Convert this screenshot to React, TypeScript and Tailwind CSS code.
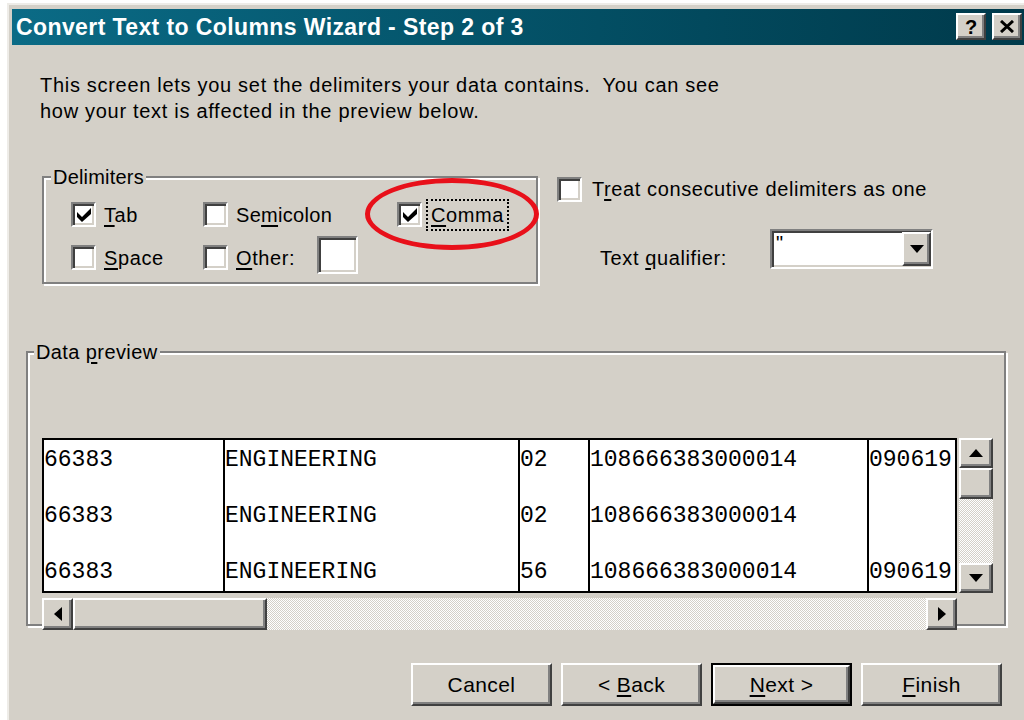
import React from 'react';

// classic 3D bevels
const raised =
  'bg-[#d4d0c8] border-2 border-t-white border-l-white border-r-[#404040] border-b-[#404040] shadow-[inset_-2px_-2px_0_#808080]';
const sunken =
  'bg-white border-2 border-t-[#808080] border-l-[#808080] border-r-white border-b-white shadow-[inset_2px_2px_0_#404040,inset_-2px_-2px_0_#d4d0c8]';
const etched = 'border-2 border-[#808080] shadow-[inset_2px_2px_0_#fff,2px_2px_0_#fff]';
const dither = 'bg-[repeating-conic-gradient(#d4d0c8_0_25%,#ffffff_0_50%)] bg-[length:2px_2px]';

function Key({ children }: { children: React.ReactNode }) {
  return <span className="underline decoration-2 underline-offset-[3px]">{children}</span>;
}

function CheckBox({ checked }: { checked?: boolean }) {
  return (
    <span className={`w-[25px] h-[25px] shrink-0 flex items-center justify-center ${sunken}`}>
      {checked && (
        <svg width="14" height="14" viewBox="0 0 7 7">
          <polygon points="0,2 2.5,4.5 7,0 7,3 2.5,7 0,4.5" fill="#000" />
        </svg>
      )}
    </span>
  );
}

function Arrow({ dir }: { dir: 'up' | 'down' | 'left' | 'right' }) {
  const pts = {
    up: '7,0 14,8 0,8',
    down: '0,0 14,0 7,8',
    left: '8,0 8,14 0,7',
    right: '0,0 8,7 0,14',
  }[dir];
  const vertical = dir === 'up' || dir === 'down';
  return (
    <svg width={vertical ? 14 : 8} height={vertical ? 8 : 14} viewBox={vertical ? '0 0 14 8' : '0 0 8 14'}>
      <polygon points={pts} fill="#000" />
    </svg>
  );
}

function ScrollButton({ dir, className = '' }: { dir: 'up' | 'down' | 'left' | 'right'; className?: string }) {
  return (
    <div className={`flex items-center justify-center shrink-0 ${raised} ${className}`}>
      <Arrow dir={dir} />
    </div>
  );
}

function TitleBar() {
  return (
    <div className="flex items-start h-[36px] bg-linear-to-r from-[#0b6b86] to-[#003a4b] pl-[4px] pr-[2px]">
      <span className="text-white font-bold text-[23px] leading-[36px] tracking-[0.4px]">
        Convert Text to Columns Wizard - Step 2 of 3
      </span>
      <div className="ml-auto mt-[4px] flex gap-[6px]">
        <div className={`w-[30px] h-[27px] flex items-center justify-center text-[20px] font-bold leading-none ${raised}`}>?</div>
        <div className={`w-[30px] h-[27px] flex items-center justify-center ${raised}`}>
          <svg width="14" height="13" viewBox="0 0 14 13">
            <path d="M1 1 L13 12 M13 1 L1 12" stroke="#000" strokeWidth="3" />
          </svg>
        </div>
      </div>
    </div>
  );
}

const rows = [
  ['66383', 'ENGINEERING', '02', '108666383000014', '090619'],
  ['66383', 'ENGINEERING', '02', '108666383000014', ''],
  ['66383', 'ENGINEERING', '56', '108666383000014', '090619'],
];
const colWidths = ['w-[181px]', 'w-[295px]', 'w-[70px]', 'w-[279px]', 'flex-1'];

function PreviewTable() {
  return (
    <div className="w-[915px] h-full bg-white border-2 border-black overflow-hidden flex font-['Liberation_Mono','Courier_New',monospace] text-[23px]">
      {colWidths.map((w, c) => (
        <div key={c} className={`${w} shrink-0 h-full overflow-hidden ${c < 4 ? 'border-r-2 border-black' : ''}`}>
          {rows.map((r, i) => (
            <div key={i} className="h-[56px] leading-[40px] whitespace-nowrap">
              {r[c]}
            </div>
          ))}
        </div>
      ))}
    </div>
  );
}

export default function App() {
  return (
    <div className="w-[1024px] h-[720px] overflow-hidden bg-white pl-[7px] pt-[3px] font-['Liberation_Sans',Arial,sans-serif] text-black">
      <div className="h-full bg-[#d4d0c8] border-l-2 border-t-2 border-[#eeece8] pl-[3px] pt-[4px]">
        <TitleBar />

        <p className="ml-[28px] mt-[27px] text-[20px] leading-[26px] tracking-[0.7px]">
          This screen lets you set the delimiters your data contains.&nbsp; You can see
          <br />
          how your text is affected in the preview below.
        </p>

        <div className="flex mt-[41px] ml-[30px] text-[20px] tracking-[0.6px]">
          <fieldset className={`relative w-[496px] h-[119px] ${etched}`}>
            <legend className="ml-[7px] px-[2px] leading-[24px] bg-[#d4d0c8] tracking-[0.2px]">Delimiters</legend>
            <div className="grid grid-cols-[132px_194px_1fr] grid-rows-[43px_43px] items-center pl-[27px] pt-[4px]">
              <label className="flex items-center gap-[8px]">
                <CheckBox checked />
                <span><Key>T</Key>ab</span>
              </label>
              <label className="flex items-center gap-[8px]">
                <CheckBox />
                <span className="tracking-[0.3px]">Se<Key>m</Key>icolon</span>
              </label>
              <label className="flex items-center gap-[4px]">
                <CheckBox checked />
                <span className="border-2 border-dotted border-black px-[3px] leading-[28px]"><Key>C</Key>omma</span>
              </label>
              <label className="flex items-center gap-[8px]">
                <CheckBox />
                <span><Key>S</Key>pace</span>
              </label>
              <div className="col-span-2 flex items-center">
                <label className="flex items-center gap-[8px]">
                  <CheckBox />
                  <span><Key>O</Key>ther:</span>
                </label>
                <div className={`ml-[22px] -mt-[6px] w-[41px] h-[38px] ${sunken}`} />
              </div>
            </div>
            {/* red highlight ring round the Comma option */}
            <div className="absolute left-[321px] -top-[11px] w-[174px] h-[72px] rounded-[50%] border-[5px] border-[#e8101a] pointer-events-none" />
          </fieldset>

          <div className="ml-[19px] flex flex-col">
            <label className="mt-[9px] flex items-center gap-[10px]">
              <CheckBox />
              <span>T<Key>r</Key>eat consecutive delimiters as one</span>
            </label>
            <div className="mt-[25px] flex items-start">
              <span className="ml-[43px] w-[170px] pt-[17px] leading-[24px]">
                Text <Key>q</Key>ualifier:
              </span>
              <div className={`w-[163px] h-[40px] flex ${sunken}`}>
                <span className="flex-1 pl-[4px] leading-[20px] pt-[2px]">"</span>
                <ScrollButton dir="down" className="w-[29px] my-[1px]" />
              </div>
            </div>
          </div>
        </div>

        <fieldset className={`mt-[56px] ml-[14px] w-[980px] h-[286px] text-[20px] ${etched}`}>
          <legend className="ml-[6px] px-[2px] leading-[24px] bg-[#d4d0c8] tracking-[0.4px]">
            Data <Key>p</Key>review
          </legend>
          <div className="pt-[74px] pl-[14px] relative">
            <div className="flex h-[155px]">
              <PreviewTable />
              <div className="ml-[2px] w-[34px] h-full flex flex-col">
                <ScrollButton dir="up" className="h-[30px]" />
                <div className={`h-[31px] shrink-0 ${raised}`} />
                <div className={`flex-1 ${dither}`} />
                <ScrollButton dir="down" className="h-[30px]" />
              </div>
            </div>
            <div className="mt-[5px] w-[915px] h-[32px] flex">
              <ScrollButton dir="left" className="w-[31px]" />
              <div className={`w-[194px] shrink-0 ${raised}`} />
              <div className={`flex-1 ${dither}`} />
              <ScrollButton dir="right" className="w-[31px]" />
            </div>
          </div>
        </fieldset>

        <div className="mt-[37px] flex justify-end gap-[9px] pr-[22px] text-[21px] tracking-[0.4px]">
          <button className={`w-[141px] h-[43px] ${raised}`}>Cancel</button>
          <button className={`w-[141px] h-[43px] ${raised}`}>
            &lt; <Key>B</Key>ack
          </button>
          <div className="w-[141px] h-[43px] border-2 border-black flex">
            <button className={`flex-1 ${raised}`}>
              <Key>N</Key>ext &gt;
            </button>
          </div>
          <button className={`w-[141px] h-[43px] ${raised}`}>
            <Key>F</Key>inish
          </button>
        </div>
      </div>
    </div>
  );
}
